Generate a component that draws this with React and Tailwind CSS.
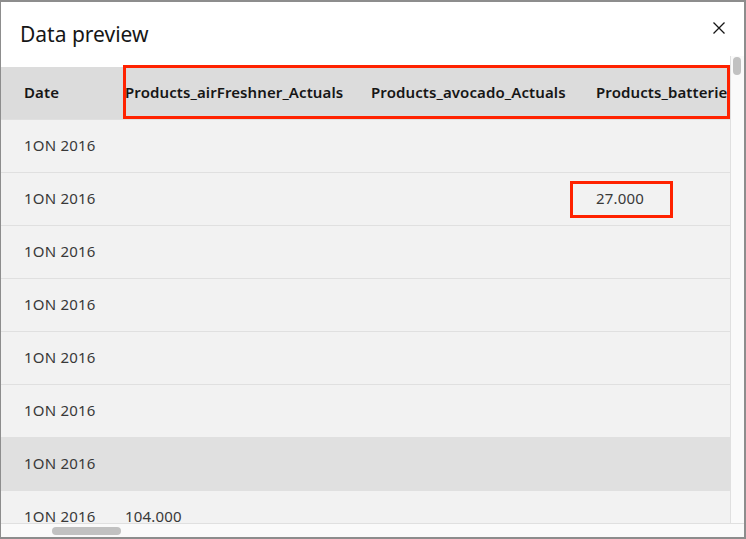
import React from "react";

const rows = [
  { d: "1ON 2016" },
  { d: "1ON 2016", c4: "27.000" },
  { d: "1ON 2016" },
  { d: "1ON 2016" },
  { d: "1ON 2016" },
  { d: "1ON 2016" },
  { d: "1ON 2016", hover: true },
  { d: "1ON 2016", c2: "104.000" },
  { d: "1ON 2016" },
];

export default function App() {
  return (
    <div
      className="relative w-[746px] h-[539px] bg-white border-2 border-l border-[#8d8d8d] flex flex-col overflow-hidden"
      style={{ fontFamily: '"Noto Sans", "Liberation Sans", sans-serif' }}
    >
      {/* Title */}
      <div className="h-[54px] shrink-0 flex items-start justify-between pl-[19px] pr-[17px]">
        <h2 className="mt-[18px] text-[21px] leading-[28px] text-[#161616] font-normal">Data preview</h2>
        <svg className="mt-[18px]" width="16" height="16" viewBox="0 0 16 16" fill="none">
          <path d="M2.5 2.5 L13.5 13.5 M13.5 2.5 L2.5 13.5" stroke="#161616" strokeWidth="1.3" />
        </svg>
      </div>

      {/* Body */}
      <div className="flex h-[467px] shrink-0">
        <div className="w-[729px] overflow-hidden">
          <div className="h-[11px] bg-white" />
          <div className="flex h-[52px] bg-[#dcdcdc] items-center pb-[1px] text-[15px] font-semibold text-[#161616] whitespace-nowrap tracking-[0.1px]">
            <div className="w-[124px] shrink-0 pl-[23px]">Date</div>
            <div className="w-[246px] shrink-0">Products_airFreshner_Actuals</div>
            <div className="w-[225px] shrink-0">Products_avocado_Actuals</div>
            <div className="w-[200px] shrink-0">Products_batteries_Actuals</div>
          </div>
          {rows.map((r, i) => (
            <div
              key={i}
              className={`flex h-[53px] items-center pb-[2px] border-t border-[#e0e0e0] first:border-t-0 text-[15px] text-[#393939] whitespace-nowrap tracking-[0.2px] ${
                r.hover ? "bg-[#e0e0e0]" : "bg-[#f2f2f2]"
              }`}
            >
              <div className="w-[124px] shrink-0 pl-[23px]">{r.d}</div>
              <div className="w-[246px] shrink-0">{r.c2 || ""}</div>
              <div className="w-[225px] shrink-0"></div>
              <div className="w-[200px] shrink-0">{r.c4 || ""}</div>
            </div>
          ))}
        </div>
        {/* vertical scrollbar */}
        <div className="w-[14px] shrink-0 bg-[#fafafa] border-l border-[#e0e0e0] pt-[1px] pl-[2px]">
          <div className="w-[8px] h-[18px] rounded-full bg-[#c1c1c1]" />
        </div>
      </div>

      {/* horizontal scrollbar */}
      <div className="h-[14px] shrink-0 bg-[#fafafa] border-t border-[#e0e0e0] pl-[51px] pt-[3px]">
        <div className="w-[69px] h-[8px] rounded-full bg-[#c1c1c1]" />
      </div>

      {/* annotation boxes */}
      <div className="absolute left-[122px] top-[63px] w-[607px] h-[54px] border-[3px] border-[#ff2200]" />
      <div className="absolute left-[569px] top-[179px] w-[103px] h-[37px] border-[3px] border-[#ff2200]" />
    </div>
  );
}
